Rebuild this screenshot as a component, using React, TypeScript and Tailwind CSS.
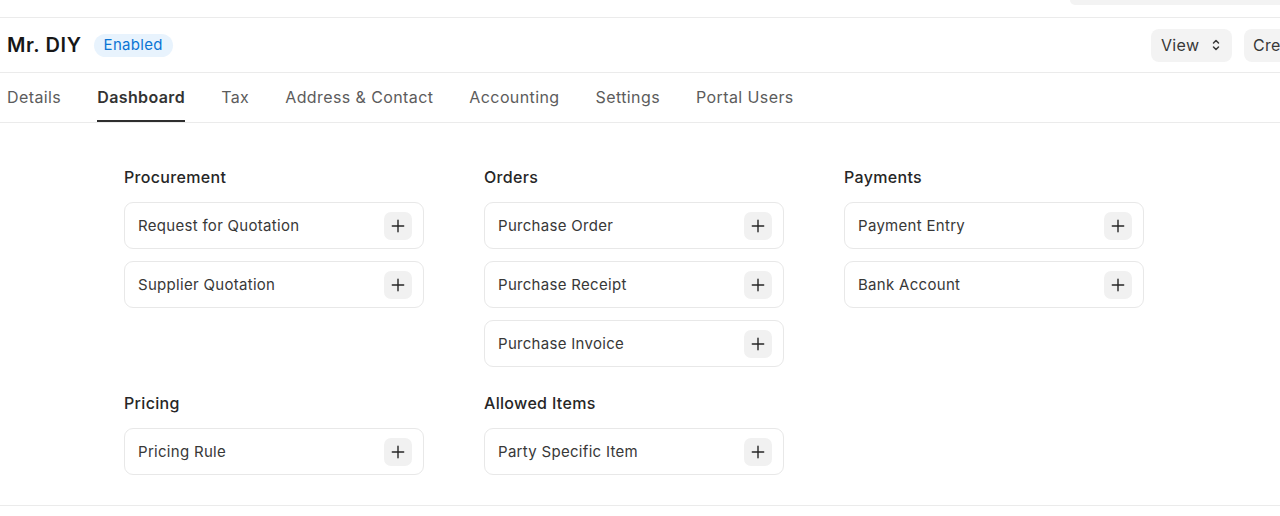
import React from "react";

const Plus = () => (
  <svg width="16" height="16" viewBox="0 0 16 16" fill="none" stroke="#262626" strokeWidth="1.4" strokeLinecap="round">
    <path d="M8 2.3v11.4M2.3 8h11.4" />
  </svg>
);

const Card = ({ label }: { label: string }) => (
  <div className="flex h-[47px] items-center justify-between rounded-[9px] border border-[#e8e8e8] bg-white pl-[13px] pr-[11px]">
    <span className="pt-[2px] text-[15px] tracking-[0.02em] text-[#383838]">{label}</span>
    <button className="flex h-[28px] w-[28px] items-center justify-center rounded-[7px] bg-[#f1f1f1]">
      <Plus />
    </button>
  </div>
);

const Section = ({ title, items }: { title: string; items: string[] }) => (
  <div className="flex flex-col">
    <div className="h-[20px] text-[16px] font-medium leading-[20px] tracking-[0.02em] text-[#262626]">{title}</div>
    <div className="mt-[15px] flex flex-col gap-[12px]">
      {items.map((i) => (
        <Card key={i} label={i} />
      ))}
    </div>
  </div>
);

export default function App() {
  const tabs = ["Details", "Dashboard", "Tax", "Address & Contact", "Accounting", "Settings", "Portal Users"];
  return (
    <div className="min-h-[516px] w-[1280px] overflow-hidden bg-white" style={{ fontFamily: "Inter, 'Noto Sans', sans-serif" }}>
      <div className="flex h-[18px] justify-end border-b border-[#ebebeb]">
        <div className="h-[5px] w-[210px] rounded-bl-[9px] bg-[#f3f3f3]" />
      </div>
      <div className="flex h-[55px] items-center justify-between overflow-hidden border-b border-[#ebebeb] pl-[7px]">
        <div className="flex items-center gap-[12px]">
          <h1 className="text-[20px] font-semibold tracking-[0.03em] text-[#171717]">Mr. DIY</h1>
          <span className="flex h-[23px] items-center rounded-full bg-[#e8f3fd] px-[10px] text-[15px] tracking-[0.02em] text-[#0b75d4]">Enabled</span>
        </div>
        <div className="mr-[-50px] flex shrink-0 items-center gap-[12px]">
          <button className="flex h-[33px] w-[81px] items-center gap-[12px] rounded-[8px] bg-[#f3f3f3] pl-[10px] text-[16px] tracking-[0.02em] text-[#383838]">
            View
            <svg width="10" height="14" viewBox="0 0 10 14" fill="none" stroke="#383838" strokeWidth="1.5" strokeLinecap="round" strokeLinejoin="round">
              <path d="M2.5 5L5 2.5 7.5 5M2.5 9L5 11.5 7.5 9" />
            </svg>
          </button>
          <button className="flex h-[33px] w-[86px] items-center rounded-[8px] bg-[#f3f3f3] pl-[9px] text-[16px] tracking-[0.02em] text-[#383838]">Create</button>
        </div>
      </div>
      <div className="flex h-[50px] items-stretch gap-[36px] border-b border-[#ebebeb] pl-[7px]">
        {tabs.map((t) => (
          <div
            key={t}
            className={
              t === "Dashboard"
                ? "flex items-center border-b-2 border-[#2e2e2e] text-[16px] font-semibold tracking-[0.025em] text-[#333333]"
                : "flex items-center border-b-2 border-transparent text-[16px] tracking-[0.025em] text-[#5c5c5c]"
            }
          >
            {t}
          </div>
        ))}
      </div>
      <div className="border-b border-[#ebebeb] pb-[30px] pl-[124px] pt-[44px]">
        <div className="grid w-[1020px] grid-cols-[300px_300px_300px] gap-x-[60px] gap-y-[26px]">
          <Section title="Procurement" items={["Request for Quotation", "Supplier Quotation"]} />
          <Section title="Orders" items={["Purchase Order", "Purchase Receipt", "Purchase Invoice"]} />
          <Section title="Payments" items={["Payment Entry", "Bank Account"]} />
          <Section title="Pricing" items={["Pricing Rule"]} />
          <Section title="Allowed Items" items={["Party Specific Item"]} />
        </div>
      </div>
    </div>
  );
}
